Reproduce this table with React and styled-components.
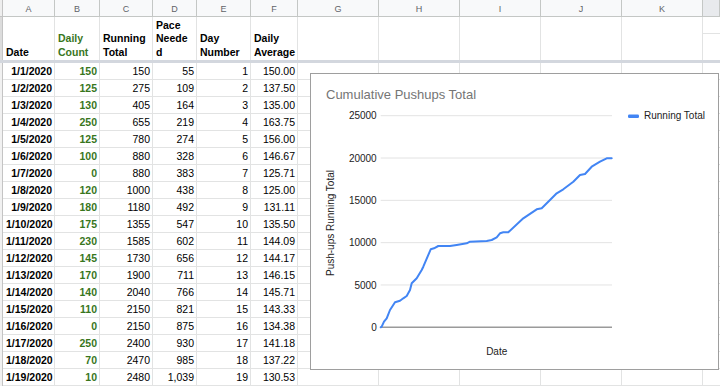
import React from 'react'
import styled, { createGlobalStyle } from 'styled-components'

const GlobalStyle = createGlobalStyle`
  html, body {
    margin: 0;
    padding: 0;
    background: #ffffff;
    overflow: hidden;
  }
  body {
    font-family: "Liberation Sans", Arial, sans-serif;
  }
`

const COLS = '3px 52px 45px 53px 44px 54px 47px 81px 81px 81px 81px 81px 17px'
const LETTERS = ['A', 'B', 'C', 'D', 'E', 'F', 'G', 'H', 'I', 'J', 'K']

const counts = [150, 125, 130, 250, 125, 100, 0, 120, 180, 175, 230, 145, 170, 140, 110, 0, 250, 70, 10]
const pace = ['55', '109', '164', '219', '274', '328', '383', '438', '492', '547', '602', '656', '711', '766', '821', '875', '930', '985', '1,039']

let total = 0
const rows = counts.map((count, i) => {
  total += count
  return {
    date: `1/${i + 1}/2020`,
    count,
    total,
    pace: pace[i],
    day: i + 1,
    avg: (total / (i + 1)).toFixed(2),
  }
})

// line trace, in chart pixels
const trace = [
  [70.7, 254.3], [71.7, 253.7], [74, 248.7], [76.7, 245.3], [80, 237], [85, 229.3],
  [90, 227.7], [93.3, 225.3], [96.7, 223], [100, 217], [101.7, 210.3], [106.7, 205.3],
  [111.7, 197], [113.3, 193.7], [120.7, 176.3], [124, 175.3], [128.3, 173], [140, 173],
  [146.7, 172], [156.7, 170.3], [160, 168.7], [176.7, 168], [181.7, 167], [186.7, 164.3],
  [190, 160.3], [193.3, 159.3], [198.3, 159.3], [213.3, 145.3], [226.7, 136.3], [231.7, 135.3],
  [240, 127], [246.7, 120.3], [253.3, 116.3], [263.3, 108.7], [270, 102], [275, 101],
  [281.7, 93.7], [290, 88.7], [296.7, 85.3], [301.7, 85.3],
]

const ticks = [25000, 20000, 15000, 10000, 5000, 0]
const yFor = (v) => 254.3 - (v / 25000) * 211.6

const App = () => {
  return (
    <>
      <GlobalStyle />
      <Sheet>
        <Row>
          <Stub $tone="head" />
          {LETTERS.map((l) => (
            <ColHead key={l}>{l}</ColHead>
          ))}
          <ColHead $filler />
        </Row>

        <Row $height={43}>
          <Stub $tone="dark" />
          <HeadCell>Date</HeadCell>
          <HeadCell $green>Daily Count</HeadCell>
          <HeadCell>Running Total</HeadCell>
          <HeadCell $wrapWord>Pace Needed</HeadCell>
          <HeadCell>Day Number</HeadCell>
          <HeadCell>Daily Average</HeadCell>
          {LETTERS.slice(6).map((l) => (
            <HeadCell key={l} />
          ))}
          <Cell $last />
        </Row>

        <FrozenLine />

        {rows.map((r) => (
          <Row key={r.date}>
            <Stub />
            <Cell $bold>{r.date}</Cell>
            <Cell $bold $green>{r.count}</Cell>
            <Cell>{r.total}</Cell>
            <Cell>{r.pace}</Cell>
            <Cell>{r.day}</Cell>
            <Cell>{r.avg}</Cell>
            {LETTERS.slice(6).map((l) => (
              <Cell key={l} />
            ))}
            <Cell $last />
          </Row>
        ))}

        <ChartPanel>
          <ChartTitle>Cumulative Pushups Total</ChartTitle>
          <svg width="407" height="267" viewBox="0 0 407 267">
            <g transform="translate(-1,-29)" fontFamily='"Liberation Sans", Arial, sans-serif'>
              {ticks.map((t) => (
                <g key={t}>
                  <line
                    x1="70.7"
                    x2="302"
                    y1={yFor(t)}
                    y2={yFor(t)}
                    stroke={t === 0 ? '#9a9a9a' : '#e3e3e3'}
                    strokeWidth={t === 0 ? 1.6 : 1}
                  />
                  <text x="66.7" y={yFor(t) + 3.6} fontSize="10" fill="#222" textAnchor="end">
                    {t}
                  </text>
                </g>
              ))}
              <polyline
                points={trace.map((p) => p.join(',')).join(' ')}
                fill="none"
                stroke="#4285f4"
                strokeWidth="2"
                strokeLinejoin="round"
                strokeLinecap="round"
              />
              <text
                x="20"
                y="150"
                fontSize="10"
                fill="#222"
                textAnchor="middle"
                transform="rotate(-90 20 150) translate(0 3.5)"
              >
                Push-ups Running Total
              </text>
              <text x="186.7" y="282" fontSize="10" fill="#222" textAnchor="middle">
                Date
              </text>
              <rect x="318" y="41.5" width="11" height="3.4" rx="1.2" fill="#4285f4" />
              <text x="334" y="46.3" fontSize="10" fill="#222">
                Running Total
              </text>
            </g>
          </svg>
        </ChartPanel>
      </Sheet>
    </>
  )
}

export default App

const Sheet = styled.div`
  position: relative;
  width: 720px;
  height: 386px;
  overflow: hidden;
  background: #ffffff;
  font-family: "Liberation Sans", Arial, sans-serif;
  color: #000000;
`

const Row = styled.div`
  display: grid;
  grid-template-columns: ${COLS};
  height: ${(p) => p.$height || 17}px;
`

const Stub = styled.div`
  box-sizing: border-box;
  border-right: 1px solid #c4c4c4;
  background: ${(p) => (p.$tone === 'dark' ? '#dcdcdc' : p.$tone === 'head' ? '#eeeeee' : '#f1f1f1')};
  ${(p) => p.$tone === 'head' && 'border-bottom: 1px solid #c4c4c4;'}
`

const ColHead = styled.div`
  box-sizing: border-box;
  display: flex;
  align-items: center;
  justify-content: center;
  background: ${(p) => (p.$filler ? '#e8eaed' : '#f8f9fa')};
  border-right: 1px solid #c4c7c5;
  border-bottom: 1px solid #c4c7c5;
  color: #5f6368;
  font-size: 9px;
  padding-top: 1px;
`

const HeadCell = styled.div`
  box-sizing: border-box;
  display: flex;
  align-items: flex-end;
  border-right: 1px solid #e2e3e3;
  padding: 0 3px 1px 3px;
  font-size: 10.5px;
  line-height: 13.5px;
  font-weight: bold;
  color: ${(p) => (p.$green ? '#38761d' : '#000000')};
  ${(p) => p.$wrapWord && 'overflow-wrap: anywhere;'}
`

const FrozenLine = styled.div`
  height: 3px;
  background: #d3d7de;
`

const Cell = styled.div`
  box-sizing: border-box;
  height: 17px;
  line-height: 16px;
  border-right: ${(p) => (p.$last ? 'none' : '1px solid #e2e3e3')};
  border-bottom: 1px solid #e2e3e3;
  padding: 0 2px 0 3px;
  text-align: right;
  white-space: nowrap;
  overflow: hidden;
  font-size: 10.5px;
  font-weight: ${(p) => (p.$bold ? 'bold' : 'normal')};
  color: ${(p) => (p.$green ? '#38761d' : '#000000')};
`

const ChartPanel = styled.div`
  position: absolute;
  left: 310px;
  top: 73px;
  width: 409px;
  height: 297px;
  box-sizing: border-box;
  border: 1px solid #9e9e9e;
  background: #ffffff;
  display: flex;
  flex-direction: column;

  svg {
    display: block;
  }
`

const ChartTitle = styled.div`
  padding: 13px 0 0 15px;
  height: 15px;
  font-size: 13px;
  line-height: 15px;
  color: #757575;
  white-space: nowrap;
`
